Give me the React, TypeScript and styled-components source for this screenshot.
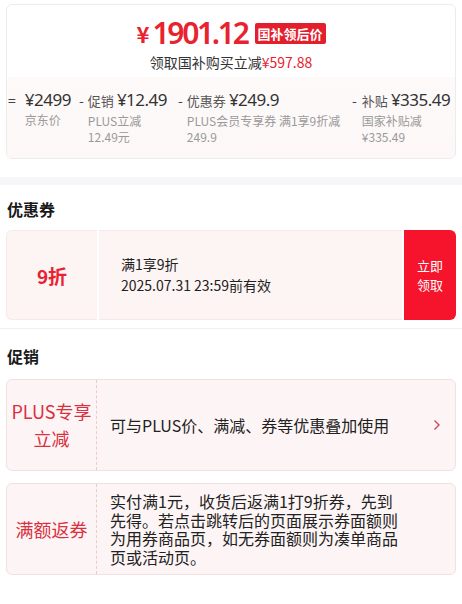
import React from "react";
import styled, { createGlobalStyle } from "styled-components";

const Global = createGlobalStyle`
  html, body { margin: 0; padding: 0; background: #fff; }
  body { font-family: "Noto Sans CJK SC", "Noto Sans", sans-serif; color: #222; }
  * { box-sizing: border-box; }
`;

const Page = styled.div`
  width: 462px;
  padding-top: 4px;
`;

const PriceCard = styled.div`
  margin: 0 6px;
  border: 1px solid #ececec;
  border-radius: 6px;
  overflow: hidden;
  height: 155px;
  display: flex;
  flex-direction: column;
`;

const PriceHead = styled.div`
  display: flex;
  flex-direction: column;
  align-items: center;
  padding-top: 11px;
  height: 72px;
`;

const PriceLine = styled.div`
  display: flex;
  align-items: center;
  height: 34px;
`;

const Yen = styled.span`
  font-size: 22px;
  font-weight: 700;
  color: #e8222f;
  line-height: 1;
`;

const BigNum = styled.span`
  font-family: "Noto Sans", sans-serif;
  font-size: 30px;
  font-weight: 600;
  letter-spacing: -2.3px;
  color: #e8222f;
  line-height: 1;
  margin-left: 3px;
`;

const Badge = styled.span`
  margin-left: 7px;
  background: #e41f2d;
  color: #fff;
  font-size: 13px;
  font-weight: 700;
  padding: 0 3px;
  height: 21px;
  line-height: 21px;
  border-radius: 2px;
`;

const SubLine = styled.div`
  font-size: 14px;
  color: #333;
  line-height: 18px;
  margin-top: 3px;
`;

const SubRed = styled.span`
  color: #e8222f;
`;

const Breakdown = styled.div`
  flex: 1;
  background: linear-gradient(#fefafa, #fdf7f7);
  display: flex;
  padding: 11px 0 0 1px;
`;

const Item = styled.div<{ $w?: number }>`
  display: flex;
  align-items: flex-start;
  width: ${(p) => (p.$w ? `${p.$w}px` : "auto")};
  flex: ${(p) => (p.$w ? "none" : "1")};
`;

const Sym = styled.span<{ $gap: number }>`
  font-size: 14px;
  color: #444;
  line-height: 24px;
  margin-right: ${(p) => p.$gap}px;
`;

const ItemBody = styled.div`
  display: flex;
  flex-direction: column;
`;

const MainLine = styled.div`
  display: flex;
  align-items: baseline;
  line-height: 24px;
  white-space: nowrap;
`;

const Label = styled.span`
  font-size: 13px;
  color: #555;
  margin-right: 3px;
`;

const Value = styled.span`
  font-family: "Noto Sans", sans-serif;
  font-size: 17px;
  letter-spacing: -0.5px;
  color: #333;
`;

const Note = styled.div`
  font-size: 12px;
  color: #999;
  line-height: 16px;
  white-space: nowrap;
  &:first-of-type {
    margin-top: 3px;
  }
`;

const Band = styled.div`
  height: 8px;
  background: #f6f6f9;
  margin-top: 18px;
`;

const SectionTitle = styled.div<{ $top: number; $bottom: number }>`
  font-size: 16px;
  font-weight: 700;
  color: #1a1a1a;
  line-height: 22px;
  padding-left: 7px;
  margin: ${(p) => p.$top}px 0 ${(p) => p.$bottom}px;
`;

const Coupon = styled.div`
  margin: 0 6px;
  height: 90px;
  display: flex;
  gap: 2px;
`;

const CouponLeft = styled.div`
  width: 91px;
  background: #fdf4f4;
  border: 1px solid #f7e9e9;
  border-right: none;
  border-radius: 6px 0 0 6px;
  display: flex;
  align-items: center;
  justify-content: center;
  font-size: 19px;
  font-weight: 700;
  color: #e8222f;
`;

const CouponMid = styled.div`
  flex: 1;
  background: #fdf4f4;
  border-top: 1px solid #f7e9e9;
  border-bottom: 1px solid #f7e9e9;
  display: flex;
  flex-direction: column;
  justify-content: center;
  padding-left: 22px;
  font-size: 14px;
  color: #222;
  line-height: 21px;
`;

const CouponBtn = styled.div`
  width: 52px;
  background: #f5142b;
  border-radius: 0 6px 6px 0;
  color: #fff;
  font-size: 13px;
  display: flex;
  flex-direction: column;
  align-items: center;
  justify-content: center;
`;

const BtnLine = styled.span`
  display: block;
  line-height: 19px;
  height: 19px;
`;

const Divider = styled.div`
  height: 1px;
  background: #f0f0f0;
  margin: 8px 0 0;
`;

const PromoList = styled.div`
  display: flex;
  flex-direction: column;
  gap: 12px;
`;

const Promo = styled.div`
  margin: 0 6px;
  height: 92px;
  background: #fdf5f5;
  border: 1px solid #f1e1e1;
  border-radius: 6px;
  display: flex;
`;

const PromoTag = styled.div`
  width: 90px;
  border-right: 1px dashed #e8cccc;
  display: flex;
  align-items: center;
  justify-content: center;
  text-align: center;
  font-size: 18px;
  line-height: 27px;
  color: #d9303f;
`;

const PromoBody = styled.div`
  flex: 1;
  display: flex;
  align-items: center;
  padding: 0 14px 0 13px;
`;

const PromoText = styled.div`
  flex: 1;
  max-width: 292px;
  font-size: 16px;
  line-height: 18.5px;
  color: #222;
`;

const Chevron = styled.svg`
  margin-left: auto;
  width: 8px;
  height: 12px;
`;

const items = [
  { sym: "=", gap: 9, w: 71, label: "", value: "¥2499", notes: ["京东价"] },
  { sym: "-", gap: 4, w: 99, label: "促销", value: "¥12.49", notes: ["PLUS立减", "12.49元"] },
  { sym: "-", gap: 4, w: 174, label: "优惠券", value: "¥249.9", notes: ["PLUS会员专享券 满1享9折减", "249.9"] },
  { sym: "-", gap: 5, w: 0, label: "补贴", value: "¥335.49", notes: ["国家补贴减", "¥335.49"] },
];

export default function App() {
  return (
    <Page>
      <Global />
      <PriceCard>
        <PriceHead>
          <PriceLine>
            <Yen>¥</Yen>
            <BigNum>1901.12</BigNum>
            <Badge>国补领后价</Badge>
          </PriceLine>
          <SubLine>
            领取国补购买立减<SubRed>¥597.88</SubRed>
          </SubLine>
        </PriceHead>
        <Breakdown>
          {items.map((it) => (
            <Item key={it.value} $w={it.w}>
              <Sym $gap={it.gap}>{it.sym}</Sym>
              <ItemBody>
                <MainLine>
                  {it.label && <Label>{it.label}</Label>}
                  <Value>{it.value}</Value>
                </MainLine>
                {it.notes.map((n) => (
                  <Note key={n}>{n}</Note>
                ))}
              </ItemBody>
            </Item>
          ))}
        </Breakdown>
      </PriceCard>
      <Band />
      <SectionTitle $top={13} $bottom={10}>优惠券</SectionTitle>
      <Coupon>
        <CouponLeft>9折</CouponLeft>
        <CouponMid>
          <div>满1享9折</div>
          <div>2025.07.31 23:59前有效</div>
        </CouponMid>
        <CouponBtn>
          <BtnLine>立即</BtnLine>
          <BtnLine>领取</BtnLine>
        </CouponBtn>
      </Coupon>
      <Divider />
      <SectionTitle $top={16} $bottom={12}>促销</SectionTitle>
      <PromoList>
        <Promo>
          <PromoTag>
            PLUS专享
            <br />
            立减
          </PromoTag>
          <PromoBody>
            <PromoText>可与PLUS价、满减、券等优惠叠加使用</PromoText>
            <Chevron viewBox="0 0 8 12">
              <polyline points="1.5,1.5 6,6 1.5,10.5" fill="none" stroke="#c9485a" strokeWidth="1.4" />
            </Chevron>
          </PromoBody>
        </Promo>
        <Promo>
          <PromoTag>满额返券</PromoTag>
          <PromoBody>
            <PromoText>
              实付满1元，收货后返满1打9折券，先到先得。若点击跳转后的页面展示券面额则为用券商品页，如无券面额则为凑单商品页或活动页。
            </PromoText>
          </PromoBody>
        </Promo>
      </PromoList>
    </Page>
  );
}
